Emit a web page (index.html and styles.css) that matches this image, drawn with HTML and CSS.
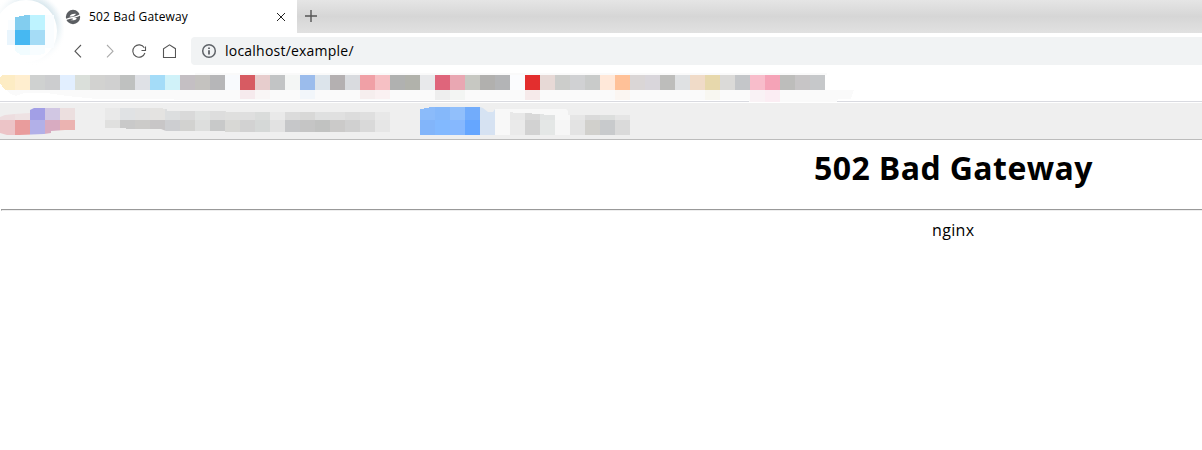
FILE: index.html
```html
<!DOCTYPE html>
<html lang="en">
<head>
<meta charset="utf-8">
<title>502 Bad Gateway</title>
<link rel="stylesheet" href="styles.css">
</head>
<body>
<header class="browser">
  <svg class="avatar" width="64" height="75" viewBox="0 0 64 75">
    <defs>
      <radialGradient id="halo" gradientUnits="userSpaceOnUse" cx="28" cy="29" r="38"><stop offset=".76" stop-color="#d5e5ec"/><stop offset=".88" stop-color="#f0f6f9"/><stop offset="1" stop-color="#fff" stop-opacity="0"/></radialGradient>
      <linearGradient id="fade" x1=".3" y1=".8" x2=".8" y2="0"><stop stop-color="#fff"/><stop offset=".5" stop-color="#fff" stop-opacity=".7"/><stop offset="1" stop-color="#fff" stop-opacity="0"/></linearGradient>
    </defs>
    <path fill="#fff" d="M0 0h64v75H0z"/>
    <circle cx="28" cy="29" r="38" fill="url(#halo)"/>
    <path fill="url(#fade)" d="M0 0h64v75H0z"/>
    <circle cx="26" cy="31" r="31" fill="#fff"/>
    <g shape-rendering="crispEdges">
      <path fill="#e9f5fd" d="M7 30h8v15H7z"/><path fill="#fafdff" d="M8 20h7v10H8zM45 15h9v33h-9z"/>
      <path fill="#82cdef" d="M15 17h4v-1h5v-1h6v15H15z"/><path fill="#bef3ff" d="M30 15h15v15H30z"/>
      <path fill="#46b8f2" d="M15 30h15v15H15z"/><path fill="#a5dcf6" d="M30 30h15v15H30z"/>
      <path fill="#f1fcff" d="M15 45h15v10h-9l-6-4z"/><path fill="#f8fdff" d="M30 45h15v8l-6 2h-9z"/>
    </g>
  </svg>
  <div class="chrome">
    <div class="tabs">
      <div class="tab">
        <svg class="favicon" width="16" height="16" viewBox="0 0 16 16"><circle cx="8" cy="8" r="7.200" fill="#5b5e62"/><path d="M4.600 7.600C5 5.800 7.500 4.600 11 4.900 10 6.500 7.500 7.400 4.600 7.600zM16 5.800c-2 1.700-4.500 2.600-7 3 2 0 3 .3 2.600 1-.8 1.300-3.300 1.800-6.300 1.400 2.300-.5 3.300-1.300 2.500-1.500-1.800-.4-4.800.6-7.800 2.200v-1.600c2.500-1.300 5-2 8-2.500 3.300-.6 5.800-1.600 8-3.500z" fill="#fff"/></svg>
        <span class="tab-title">502 Bad Gateway</span>
        <svg class="close" width="10" height="10" viewBox="0 0 10 10"><path d="m1 1 8 8m0-8-8 8" stroke="#222"/></svg>
      </div>
      <svg class="plus" width="14" height="14" viewBox="0 0 14 14"><path d="M7 1v12M1 7h12" stroke="#555" stroke-width="1.400"/></svg>
    </div>
    <div class="navigation">
      <svg class="nav-icons" width="112" height="20" viewBox="0 0 112 20" fill="none" stroke="#555" stroke-width="1.100">
        <path d="m17 4-6 6.200 6 6.200"/><path stroke="#aaa" d="m43 4 6 6.200-6 6.200"/>
        <path d="M80.300 6.800A6.200 6.200 0 1 0 80.900 12"/><path d="M81.500 5.500v4h-4"/>
        <path d="M99.500 16.500V7.700l6-3.900 6 3.900v8.800z"/>
      </svg>
      <div class="address">
        <svg width="16" height="16" viewBox="0 0 16 16"><circle cx="8" cy="8" r="6.300" fill="none" stroke="#5f6368" stroke-width="1.500"/><path d="M7.100 7.200h1.800v4.200H7.100zM7.100 4.400h1.800V6H7.100z" fill="#5f6368"/></svg>
        <span class="url">localhost/example/</span>
      </div>
    </div>
  </div>
</header>
<svg class="bookmarks" width="1202" height="38" viewBox="0 0 1202 38" shape-rendering="crispEdges">
  <path fill="#fff" d="M0 0h1202v38H0z"/>
  <path fill="#d9dae0" d="M0 36h1202v1H0z"/>
  <path fill="#fafafa" d="M195 8h632v2H195zM7 25h847l-3 9h-13l-1 3h-88v-2H174v-1H97l-30-3-20-3H24l-8 3-7-3z"/>
  <g id="bookmark-cells"></g>
  <path fill="#fff" d="M0 10h2l-2 3zM0 18l5 7H0z"/>
  <path fill="#f6eaed" d="M240 25h15v9h-15z"/><path fill="#f9f6f6" d="M255 25h15v9h-15z"/>
  <path fill="#f2f6fa" d="M300 25h15v9h-15z"/><path fill="#f6eeee" d="M360 25h15v9h-15z"/><path fill="#faf1f2" d="M375 25h15v9h-15z"/>
  <path fill="#eee" d="M435 25h15v10h-15z"/><path fill="#f3f5f3" d="M450 25h15v10h-15z"/>
  <path fill="#f6eaea" d="M525 25h15v10h-15z"/><path fill="#fbf6f2" d="M615 25h15v10h-15z"/>
  <path fill="#f8f7f1" d="M705 25h15v10h-15z"/><path fill="#f9f2f5" d="M750 25h15v12h-15z"/><path fill="#fbedf3" d="M765 25h15v12h-15z"/>
</svg>
<svg class="toolbar" width="1202" height="37" viewBox="0 0 1202 37" shape-rendering="crispEdges">
  <defs>
    <clipPath id="pink"><path d="M0 14l5-2 10-1 15-1V7l4-2h41v22H65l-14 1v2l-7 1-25 1H7l-7-2z"/></clipPath>
    <clipPath id="gray"><path d="M105 5h58v1h4v2h59v1h164v20H225v-1h-59l-5-2h-35v-1h-21z"/></clipPath>
    <clipPath id="blue"><path d="M420 6h4V5h5V4h51l3 1 5 4h5l2-3h71l2 2v4h62v20H420z"/></clipPath>
  </defs>
  <path fill="#efefef" d="M0 0h1202v36H0z"/><path fill="#bcbcbc" d="M0 36h1202v1H0z"/>
  <g id="pink-cells" clip-path="url(#pink)"></g>
  <g id="gray-cells" clip-path="url(#gray)"></g>
  <g id="blue-cells" clip-path="url(#blue)"></g>
  <path fill="#e8e8e8" d="M510 9h3v1h12v7h-15z"/>
  <path fill="#d9d9d9" d="M525 10h7v1h8v6h-15z"/>
  <path fill="#e2e4e4" d="M540 11h4v1h11v5h-15z"/>
</svg>
<main class="page">
  <h1>502 Bad Gateway</h1>
  <hr>
  <p>nginx</p>
</main>
<script src="cells.js"></script>
</body>
</html>
```
FILE: styles.css
```css
* { box-sizing: border-box; }
body { margin: 0; width: 1202px; height: 450px; overflow: hidden; background: #fff; color: #000; font-family: "Open Sans", "Noto Sans", sans-serif; }
svg { display: block; flex: none; }
.browser { display: flex; height: 65px; }
.chrome { flex: 1; min-width: 0; }
.tabs { display: flex; height: 33px; background: linear-gradient(#e5e5e5, #d6d6d6 50%, #e1e1e1); }
.tab { display: flex; align-items: center; width: 233px; background: #fff; }
.favicon { margin-left: 1px; }
.tab-title { margin-left: 8px; width: 100px; font-size: 12px; line-height: 20px; letter-spacing: .13px; white-space: nowrap; }
.close { margin-left: 87px; }
.plus { margin: 9px 0 0 7px; }
.navigation { display: flex; padding-top: 4px; }
.nav-icons { margin-top: 4px; }
.address { display: flex; flex: 1; align-items: center; height: 28px; margin-left: 15px; padding-left: 10px; background: #f1f3f4; border-radius: 4px 0 0 4px; }
.url { margin: -2px 0 0 8px; font-size: 14px; letter-spacing: .22px; white-space: nowrap; }
.page { height: 310px; }
h1 { width: 280px; margin: 6px 0 0 814px; font-size: 32px; line-height: 44px; font-weight: 700; letter-spacing: .4px; white-space: nowrap; }
hr { height: 2px; margin: 19px 0 0 1px; border: 1px solid #999; border-bottom-color: #eee; border-right: 0; }
p { margin: 7px 0 0 932px; font-size: 16px; line-height: 24px; letter-spacing: .35px; }
```
FILE: cells.js
```js
function drawCells(id, x, y, height, colors) {
  const group = document.getElementById(id);
  colors.split(' ').forEach((color, index) => {
    const cell = document.createElementNS('http://www.w3.org/2000/svg', 'rect');
    const attributes = { x: x + index * 15, y, width: 15, height, fill: '#' + color };
    Object.entries(attributes).forEach(([key, value]) => cell.setAttribute(key, value));
    group.append(cell);
  });
}
drawCells('bookmark-cells', 0, 10, 15, 'fdecc4 ffeecf cfd1d0 cccdcf e2efff dadfda d2d2d0 d0d0d0 bfc1c0 dfe1e6 a4dcf8 d0f2f9 c4bfc3 c4c2bf b6b6b8 f8fafd d75b62 e7cdcd c2c4c5 f4f6f5 9bbcec dce4eb b4b0b1 d9dbdf f0a0a6 f6c0c4 b0b1b0 b1b2ab e8e9eb df657b e9a7b2 c7c8c2 b1b0ae b3b4b6 fbfcfe e32e2e e7d9d6 cccdcb d0d1d3 c9cbca ffe8d9 ffc198 dad6d6 d9d6db bdbdbb dfe1e3 f0dbc8 e7d8ac dbdad8 c4c6c9 f8bdcb f5a3b7 bdbdbb c7c5c6 c6c8ca');
drawCells('pink-cells', 0, 0, 17, 'eddddf eee2e3 a29fe6 d1c7e3 ecdfdf');
drawCells('pink-cells', 0, 17, 16, 'ecc4c7 e99c9c b2b0e8 d8abc1 ebb3b1');
drawCells('gray-cells', 105, 0, 17, 'e9e9e9 e0e2e4 e2e2e2 e4e3e1 dcdedf d9d9d9 e0e2e1 dddddd dfdfde dfdfdf dadcdb e9e9e9 dbdbdb d8d8d7 dfe0e0 e0e0e0 dcdcdc dfdfdf e8e8e8');
drawCells('gray-cells', 105, 17, 14, 'e0e0df c9c9c9 cccbc9 c8c6c7 cdced1 d2d2d0 dddedd c8c9c9 d8d8d5 d2d2d2 d5d8d7 e2e2e2 c6c7c9 c5c5c5 c1c2c1 cbcac9 d0d0d0 d9d9d9 e6e6e6');
drawCells('blue-cells', 420, 0, 17, '8bbbfa 85b8fa 91bffb 72acfb d6e3f3 f8f8f8 f8f8f8 f8f8f8 f8f8f8 f8f8f8 e6e6e6 dadada dcdedd e5e5e5');
drawCells('blue-cells', 420, 17, 15, '82b5fa 82b9ff 86b8fe 65a6ff d6e2f2 f8f8f8 eaeaea d2d2d2 e4e7e6 f6f6f6 e3e3e3 d1d0cc c8cacc dadada');
```
